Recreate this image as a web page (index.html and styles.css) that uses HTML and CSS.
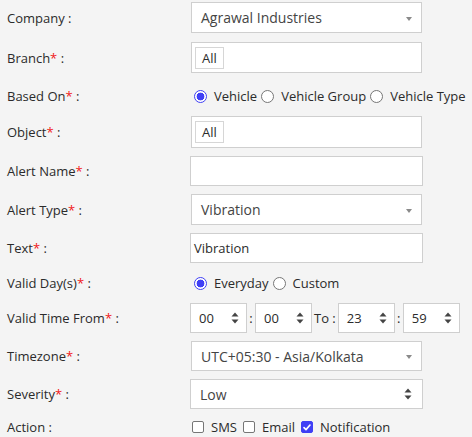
FILE: index.html
```html
<!DOCTYPE html>
<html>
<head>
<meta charset="utf-8">
<link rel="stylesheet" href="styles.css">
</head>
<body>
<div class="form">
  <div class="row r-company">
    <div class="label">Company :</div>
    <div class="select"><span class="val">Agrawal Industries</span><span class="caret"></span></div>
  </div>
  <div class="row r-branch">
    <div class="label">Branch<span class="req">*</span> :</div>
    <div class="multi"><span class="tag">All</span></div>
  </div>
  <div class="row r-radio">
    <div class="label">Based On<span class="req">*</span> :</div>
    <div class="choices">
      <span class="radio on"></span><span class="opt">Vehicle</span>
      <span class="radio"></span><span class="opt">Vehicle Group</span>
      <span class="radio"></span><span class="opt">Vehicle Type</span>
    </div>
  </div>
  <div class="row r-object">
    <div class="label">Object<span class="req">*</span> :</div>
    <div class="multi tall"><span class="tag">All</span></div>
  </div>
  <div class="row r-name">
    <div class="label">Alert Name<span class="req">*</span> :</div>
    <div class="input"></div>
  </div>
  <div class="row r-type">
    <div class="label">Alert Type<span class="req">*</span> :</div>
    <div class="select"><span class="val">Vibration</span><span class="caret"></span></div>
  </div>
  <div class="row r-text">
    <div class="label">Text<span class="req">*</span> :</div>
    <div class="input"><span class="ival">Vibration</span></div>
  </div>
  <div class="row r-days">
    <div class="label">Valid Day(s)<span class="req">*</span> :</div>
    <div class="choices">
      <span class="radio on"></span><span class="opt">Everyday</span>
      <span class="radio"></span><span class="opt">Custom</span>
    </div>
  </div>
  <div class="row r-time">
    <div class="label">Valid Time From<span class="req">*</span> :</div>
    <div class="times">
      <div class="num"><span class="nval">00</span><span class="spin"><svg width="8" height="12" viewBox="0 0 8 12"><path d="M4 0.5L7.5 4.5H0.5Z M4 11.5L7.5 7.5H0.5Z" fill="#444"/></svg></span></div>
      <span class="sep">:</span>
      <div class="num"><span class="nval">00</span><span class="spin"><svg width="8" height="12" viewBox="0 0 8 12"><path d="M4 0.5L7.5 4.5H0.5Z M4 11.5L7.5 7.5H0.5Z" fill="#444"/></svg></span></div>
      <span class="to">To :</span>
      <div class="num"><span class="nval">23</span><span class="spin"><svg width="8" height="12" viewBox="0 0 8 12"><path d="M4 0.5L7.5 4.5H0.5Z M4 11.5L7.5 7.5H0.5Z" fill="#444"/></svg></span></div>
      <span class="sep">:</span>
      <div class="num"><span class="nval">59</span><span class="spin"><svg width="8" height="12" viewBox="0 0 8 12"><path d="M4 0.5L7.5 4.5H0.5Z M4 11.5L7.5 7.5H0.5Z" fill="#444"/></svg></span></div>
    </div>
  </div>
  <div class="row r-tz">
    <div class="label">Timezone<span class="req">*</span> :</div>
    <div class="select"><span class="val">UTC+05:30 - Asia/Kolkata</span><span class="caret"></span></div>
  </div>
  <div class="row r-sev">
    <div class="label">Severity<span class="req">*</span> :</div>
    <div class="select wide"><span class="val">Low</span><span class="updown"><svg width="8" height="12" viewBox="0 0 8 12"><path d="M4 0.5L7.5 4.5H0.5Z M4 11.5L7.5 7.5H0.5Z" fill="#444"/></svg></span></div>
  </div>
  <div class="row r-action">
    <div class="label">Action :</div>
    <div class="checks">
      <span class="check"></span><span class="opt">SMS</span>
      <span class="check"></span><span class="opt">Email</span>
      <span class="check on"><svg width="11" height="11" viewBox="0 0 11 11"><path d="M2.2 5.6L4.4 7.8L8.8 2.8" fill="none" stroke="#fff" stroke-width="1.8" stroke-linecap="round" stroke-linejoin="round"/></svg></span><span class="opt">Notification</span>
    </div>
  </div>
</div>
</body>
</html>
```
FILE: styles.css
```css
html, body {
  margin: 0;
  padding: 0;
  background: #f4f4f4;
}
body {
  font-family: "Open Sans", "DejaVu Sans", sans-serif;
  color: #2b2b2b;
  width: 472px;
  height: 437px;
  overflow: hidden;
}
.form {
  display: flex;
  flex-direction: column;
  gap: 8px;
  padding: 2px 0 0 7px;
}
.row {
  display: grid;
  grid-template-columns: 183px 1fr;
  align-items: center;
}
.r-branch { margin-top: 1px; }
.label {
  font-size: 13px;
  color: #2b2b2b;
  white-space: nowrap;
}
.req { color: #f01818; }

.select, .multi {
  box-sizing: border-box;
  width: 231px;
  margin-left: 1px;
  height: 31px;
  background: #fff;
  border: 1px solid #cfcfcf;
  display: flex;
  align-items: center;
  position: relative;
}
.r-tz .select { height: 30px; }
.multi.tall { height: 32px; }
.select .val {
  font-size: 14px;
  color: #444;
  padding-left: 9px;
  white-space: nowrap;
}
.caret {
  position: absolute;
  right: 9px;
  top: 50%;
  margin-top: -1px;
  width: 0;
  height: 0;
  border-left: 3.5px solid transparent;
  border-right: 3.5px solid transparent;
  border-top: 4px solid #8a8a8a;
}
.select.wide {
  width: 233px;
  margin-left: 0;
  height: 30px;
}
.select.wide .val { padding-left: 9px; }
.updown {
  position: absolute;
  right: 10px;
  top: 8px;
  display: flex;
}
.multi {
  padding-left: 3px;
}
.tag {
  box-sizing: border-box;
  height: 22px;
  padding: 0 6px;
  border: 1px solid #d6d6d6;
  font-size: 13px;
  color: #2b2b2b;
  display: flex;
  align-items: center;
  background: #fff;
}
.input {
  box-sizing: border-box;
  width: 233px;
  height: 30px;
  background: #fff;
  border: 1px solid #cfcfcf;
  display: flex;
  align-items: center;
}
.ival {
  font-size: 13px;
  color: #2b2b2b;
  padding-left: 3px;
}
.r-radio { height: 27px; padding-top: 3px; box-sizing: border-box; }
.r-days { height: 24px; }
.r-action { height: 20px; }
.choices, .checks {
  display: flex;
  align-items: center;
  font-size: 13px;
  color: #2b2b2b;
  white-space: nowrap;
}
.choices { padding-left: 4px; }
.checks { padding-left: 2px; }
.radio {
  box-sizing: border-box;
  width: 13px;
  height: 13px;
  border-radius: 50%;
  border: 1px solid #767676;
  background: #fff;
  margin-right: 7px;
  flex: none;
}
.radio.on {
  border: 1.5px solid #3f3ff5;
  background: radial-gradient(circle, #3f3ff5 0 3.6px, #fff 4.2px);
}
.opt { margin-right: 4px; }
.check {
  box-sizing: border-box;
  width: 12px;
  height: 12px;
  border-radius: 2px;
  border: 1px solid #767676;
  background: #fff;
  margin-right: 7px;
  flex: none;
  display: flex;
  align-items: center;
  justify-content: center;
}
.check.on {
  background: #3f3ff5;
  border-color: #3f3ff5;
}
.checks .opt { margin-right: 6px; }
.times {
  display: flex;
  align-items: center;
  font-size: 13px;
  color: #2b2b2b;
}
.num {
  box-sizing: border-box;
  width: 57px;
  height: 30px;
  background: #fff;
  border: 1px solid #cfcfcf;
  display: flex;
  align-items: center;
  justify-content: space-between;
  padding: 0 7px 0 8px;
}
.nval { font-size: 13px; color: #2b2b2b; }
.spin { display: flex; }
.sep { width: 8px; text-align: center; }
.to { padding: 0 2px 0 2px; white-space: nowrap; }
```
